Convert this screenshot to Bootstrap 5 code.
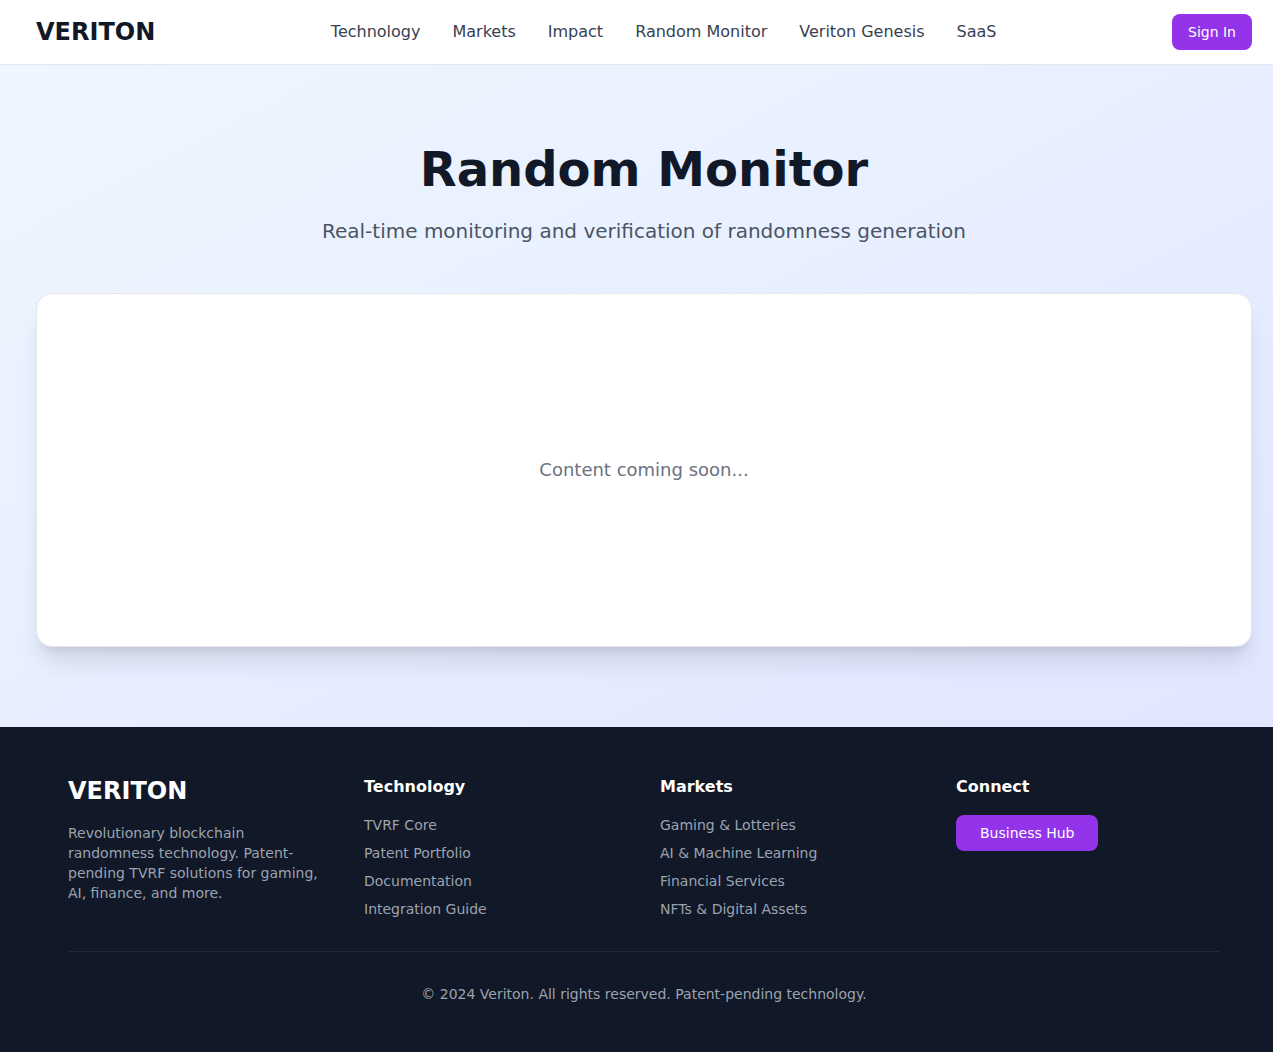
<!DOCTYPE html>
<html lang="en">
<head>
<meta charset="utf-8">
<meta name="viewport" content="width=device-width, initial-scale=1">
<title>Veriton - Random Monitor</title>
<link rel="stylesheet" href="https://cdn.jsdelivr.net/npm/bootstrap@5.3.0/dist/css/bootstrap.min.css">
<style>
  body { font-family: "DejaVu Sans", sans-serif; font-size: 16px; line-height: 24px; color: #111827; background: #111827; }
  .page-gutter { max-width: 1280px; margin: 0 auto; padding-left: 36px; padding-right: 21px; }
  .site-nav { --bs-navbar-padding-y: 14px; background: #fff; border-bottom: 1px solid #e5e7eb; }
  .site-nav .navbar-nav { gap: 32px; }
  .site-nav .navbar-nav .nav-link { padding: 0; color: #374151; }
  .site-nav .navbar-nav .nav-link:hover { color: #9333ea; }
  .wordmark { font-size: 24px; line-height: 32px; font-weight: 700; }
  .site-nav .wordmark { color: #111827; padding: 0; margin: 0; }
  .btn-violet {
    --bs-btn-color: #fff; --bs-btn-bg: #9333ea;
    --bs-btn-hover-color: #fff; --bs-btn-hover-bg: #7e22ce;
    --bs-btn-active-color: #fff; --bs-btn-active-bg: #7e22ce;
    --bs-btn-padding-x: 16px; --bs-btn-padding-y: 8px; --bs-btn-border-width: 0;
    --bs-btn-font-size: 14px; --bs-btn-line-height: 20px; --bs-btn-border-radius: 8px;
  }
  .btn-wide { --bs-btn-padding-x: 24px; }
  .monitor { background: linear-gradient(to bottom right, #eff6ff, #e0e7ff); padding: 80px 0; }
  .monitor h1 { font-size: 48px; line-height: 48px; font-weight: 700; margin-bottom: 24px; }
  .subtitle { font-size: 20px; line-height: 28px; color: #4b5563; margin-bottom: 48px; }
  .monitor-card {
    --bs-card-border-color: #e5e7eb; --bs-card-border-radius: 16px;
    min-height: 354px; color: #6b7280; font-size: 18px; line-height: 28px;
    box-shadow: 0 20px 25px -5px rgba(0,0,0,.1), 0 8px 10px -6px rgba(0,0,0,.1);
  }
  .site-footer { background: #111827; color: #9ca3af; padding: 48px 0; font-size: 14px; line-height: 20px; }
  .footer-row { --bs-gutter-x: 32px; --bs-gutter-y: 32px; }
  .site-footer .wordmark { color: #fff; margin-bottom: 16px; }
  .site-footer h2 { font-size: 16px; line-height: 24px; font-weight: 700; color: #fff; margin-bottom: 16px; }
  .site-footer li a { color: #9ca3af; text-decoration: none; }
  .site-footer li a:hover { color: #fff; }
  .copyright { border-top: 1px solid #1f2937; margin-top: 32px; padding-top: 32px; }
</style>
<script src="https://cdn.jsdelivr.net/npm/bootstrap@5.3.0/dist/js/bootstrap.bundle.min.js" defer></script>
</head>
<body>
<nav class="navbar navbar-expand site-nav" aria-label="Main">
  <div class="container-fluid page-gutter flex-wrap">
    <a class="navbar-brand wordmark" href="#">VERITON</a>
    <ul class="navbar-nav flex-wrap">
      <li class="nav-item"><a class="nav-link" href="#">Technology</a></li>
      <li class="nav-item"><a class="nav-link" href="#">Markets</a></li>
      <li class="nav-item"><a class="nav-link" href="#">Impact</a></li>
      <li class="nav-item"><a class="nav-link" href="#">Random Monitor</a></li>
      <li class="nav-item"><a class="nav-link" href="#">Veriton Genesis</a></li>
      <li class="nav-item"><a class="nav-link" href="#">SaaS</a></li>
    </ul>
    <button type="button" class="btn btn-violet">Sign In</button>
  </div>
</nav>

<main class="monitor">
  <div class="page-gutter text-center">
    <h1>Random Monitor</h1>
    <p class="subtitle">Real-time monitoring and verification of randomness generation</p>
    <div class="card monitor-card align-items-center justify-content-center">
      <p class="mb-0">Content coming soon...</p>
    </div>
  </div>
</main>

<footer class="site-footer">
  <div class="page-gutter">
    <div class="mx-auto px-md-4">
      <div class="px-2">
        <div class="row footer-row">
          <div class="col-12 col-sm-6 col-lg-3">
            <div class="wordmark">VERITON</div>
            <p class="mb-0">Revolutionary blockchain randomness technology. Patent-pending TVRF solutions for gaming, AI, finance, and more.</p>
          </div>
          <div class="col-12 col-sm-6 col-lg-3">
            <h2>Technology</h2>
            <ul class="list-unstyled mb-0 d-flex flex-column gap-2">
              <li><a href="#">TVRF Core</a></li>
              <li><a href="#">Patent Portfolio</a></li>
              <li><a href="#">Documentation</a></li>
              <li><a href="#">Integration Guide</a></li>
            </ul>
          </div>
          <div class="col-12 col-sm-6 col-lg-3">
            <h2>Markets</h2>
            <ul class="list-unstyled mb-0 d-flex flex-column gap-2">
              <li><a href="#">Gaming &amp; Lotteries</a></li>
              <li><a href="#">AI &amp; Machine Learning</a></li>
              <li><a href="#">Financial Services</a></li>
              <li><a href="#">NFTs &amp; Digital Assets</a></li>
            </ul>
          </div>
          <div class="col-12 col-sm-6 col-lg-3">
            <h2>Connect</h2>
            <button type="button" class="btn btn-violet btn-wide">Business Hub</button>
          </div>
        </div>
        <div class="copyright text-center">© 2024 Veriton. All rights reserved. Patent-pending technology.</div>
      </div>
    </div>
  </div>
</footer>
</body>
</html>
